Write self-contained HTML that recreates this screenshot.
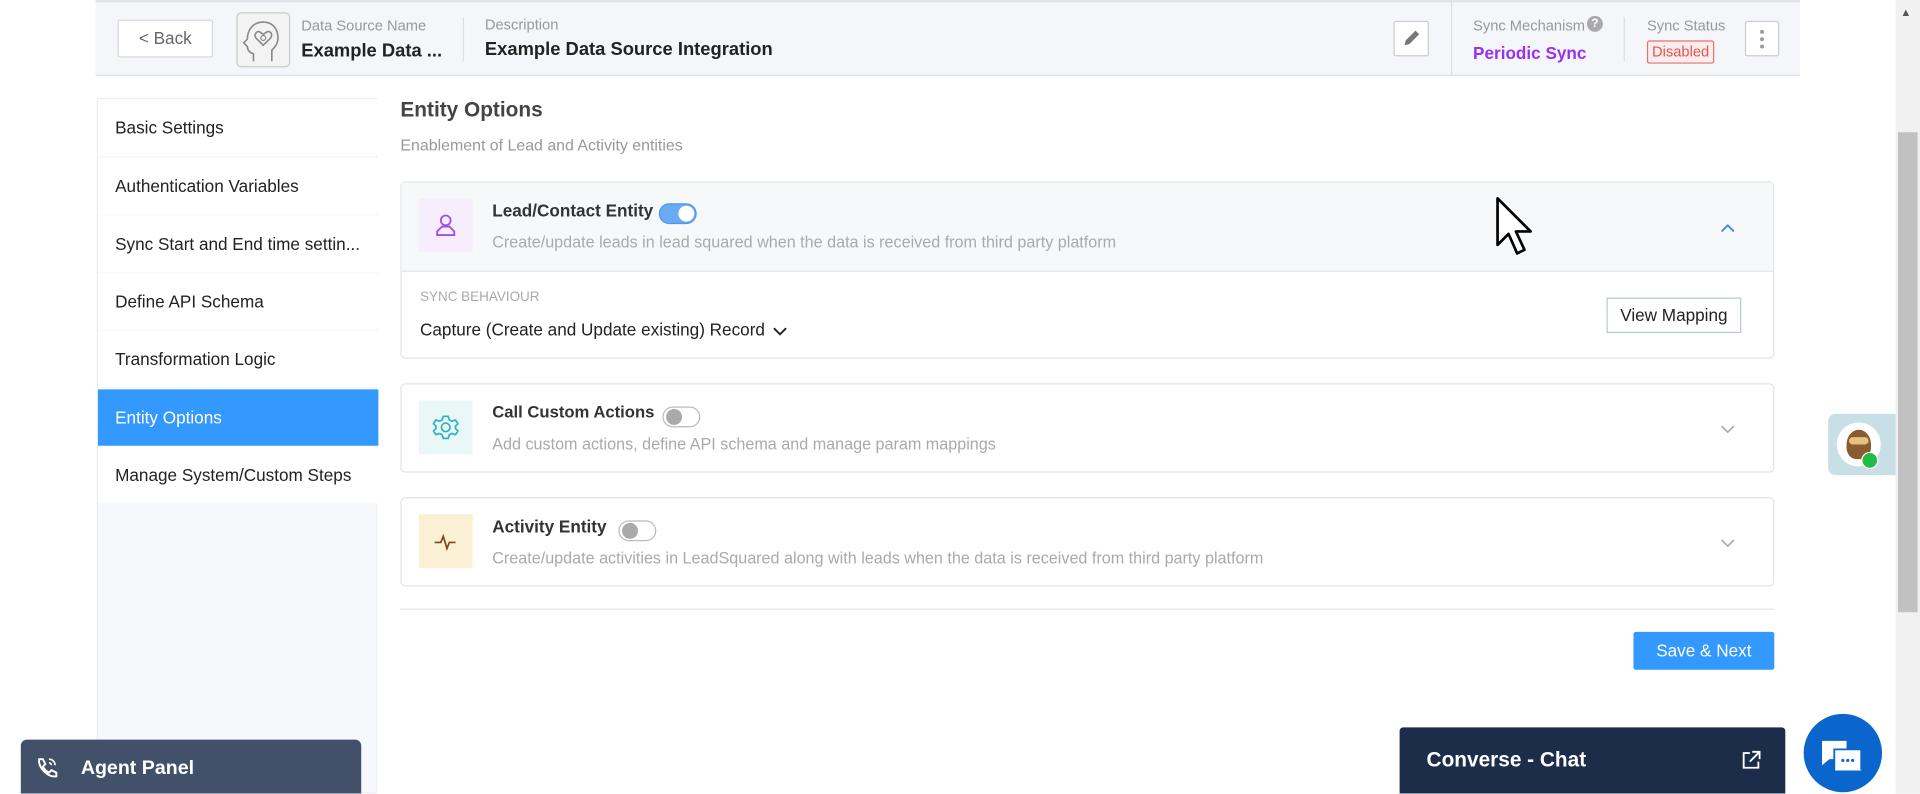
<!DOCTYPE html>
<html><head><meta charset="utf-8">
<style>
html,body{margin:0;padding:0;width:1920px;height:794px;overflow:hidden;background:#fff;}
#w{position:absolute;left:0;top:0;width:1568px;height:648px;transform:scale(1.22449);transform-origin:0 0;font-family:"Liberation Sans",sans-serif;color:#333;}
.a{position:absolute;}
.t{position:absolute;white-space:nowrap;}
.side div{position:absolute;left:0;width:229px;height:46px;background:#fff;font-size:14px;line-height:46px;padding-left:14px;box-sizing:border-box;color:#222;}
.card{position:absolute;left:327px;width:1122px;border:1px solid #e2e4ea;border-radius:4px;background:#fff;box-sizing:border-box;}
.ib{position:absolute;left:14px;width:44px;height:44px;}
.tog{position:absolute;width:31px;height:17px;border-radius:10px;box-sizing:border-box;}
.d{position:absolute;white-space:nowrap;font-size:13.2px;color:#aaa;left:74px;top:41px;}
</style></head><body><div id="w">
<!-- header -->
<div class="a" style="left:78px;top:0;width:1392px;height:62px;background:#f5f6f9;border-bottom:1px solid #dfe1e8;border-top:2px solid #e3e4ea;box-sizing:border-box;"></div>
<div class="a" style="left:96px;top:16px;width:78px;height:31px;border:1px solid #d6d8dd;background:#fff;box-sizing:border-box;border-radius:2px;font-size:14px;line-height:29px;text-align:center;color:#666;">&lt; Back</div>
<div class="a" style="left:193px;top:10px;width:44px;height:45px;border:1px solid #ccc;border-radius:4px;background:#f3f3f3;box-sizing:border-box;">
<svg width="42" height="43" viewBox="0 0 42 43"><path d="M13 39v-6c-3-1-5-3-5-6l-3-3 3-3c0-8 5-14 13-14s12 6 12 13c0 5-3 8-5 10v9" fill="none" stroke="#888" stroke-width="1.3"/><path d="M21 26l-6-6c-2-3 1-6 3-5l3 2 3-2c3-1 5 2 3 5z" fill="none" stroke="#888" stroke-width="1.3"/><circle cx="21" cy="20" r="2" fill="none" stroke="#888"/></svg></div>
<div class="t" style="left:246px;top:14px;font-size:12px;color:#999;">Data Source Name</div>
<div class="t" style="left:246px;top:33px;font-size:15px;font-weight:bold;color:#222;">Example Data ...</div>
<div class="a" style="left:378px;top:14px;width:1px;height:36px;background:#e0e0e0;"></div>
<div class="t" style="left:396px;top:13px;font-size:12px;color:#999;">Description</div>
<div class="t" style="left:396px;top:32px;font-size:15px;font-weight:bold;color:#222;">Example Data Source Integration</div>
<div class="a" style="left:1138px;top:17px;width:29px;height:29px;border:1px solid #ccc;background:#fff;box-sizing:border-box;border-radius:2px;">
<svg width="27" height="27" viewBox="0 0 27 27"><path d="M8 19l1-4 8-8 3 3-8 8z" fill="#777"/></svg></div>
<div class="a" style="left:1185px;top:0;width:1px;height:62px;background:#e0e0e0;"></div>
<div class="t" style="left:1203px;top:14px;font-size:12px;color:#999;">Sync Mechanism</div>
<div class="a" style="left:1296px;top:13px;width:13px;height:13px;border-radius:50%;background:#aaa;color:#fff;font-size:10px;line-height:13px;text-align:center;font-weight:bold;">?</div>
<div class="t" style="left:1203px;top:35px;font-size:14px;font-weight:bold;color:#9b2ef0;">Periodic Sync</div>
<div class="a" style="left:1326px;top:14px;width:1px;height:36px;background:#e0e0e0;"></div>
<div class="t" style="left:1345px;top:14px;font-size:12px;color:#999;">Sync Status</div>
<div class="a" style="left:1345px;top:33px;width:55px;height:19px;border:1px solid #e57373;background:#fdecec;border-radius:2px;box-sizing:border-box;color:#e05555;font-size:12px;line-height:17px;text-align:center;">Disabled</div>
<div class="a" style="left:1425px;top:17px;width:28px;height:29px;border:1px solid #ccc;background:#fff;box-sizing:border-box;border-radius:2px;">
<svg width="26" height="27"><circle cx="13" cy="8" r="1.6" fill="#999"/><circle cx="13" cy="14" r="1.6" fill="#999"/><circle cx="13" cy="20" r="1.6" fill="#999"/></svg></div>
<!-- scrollbar -->
<div class="a" style="left:1548px;top:0;width:20px;height:648px;background:#f1f1f1;"></div>
<div class="a" style="left:1550px;top:108px;width:16px;height:392px;background:#c1c1c1;"></div>
<div class="t" style="left:1552px;top:5px;font-size:9px;color:#555;">▲</div>
<!-- sidebar -->
<div class="a side" style="left:79px;top:80px;width:229px;height:568px;background:#f7f8fb;border:1px solid #eceef2;box-sizing:border-box;">
<div style="top:0">Basic Settings</div>
<div style="top:48px">Authentication Variables</div>
<div style="top:95px">Sync Start and End time settin...</div>
<div style="top:142px">Define API Schema</div>
<div style="top:189px">Transformation Logic</div>
<div style="top:237px;background:#3399ff;color:#fff;">Entity Options</div>
<div style="top:284px">Manage System/Custom Steps</div>
</div>
<!-- main -->
<div class="t" style="left:327px;top:80px;font-size:17px;font-weight:bold;color:#444;">Entity Options</div>
<div class="t" style="left:327px;top:111px;font-size:13px;color:#999;">Enablement of Lead and Activity entities</div>
<!-- card1 -->
<div class="card" style="top:148px;height:145px;">
<div class="a" style="left:0;top:0;width:1120px;height:72px;background:#f7f8fa;border-bottom:1px solid #e2e4ea;"></div>
<div class="ib" style="top:13px;background:#f6eefc;"><svg width="44" height="44"><circle cx="22" cy="18" r="4" fill="none" stroke="#a050e8" stroke-width="1.5"/><path d="M15 30v-3l4-4h6l4 4v3z" fill="none" stroke="#a050e8" stroke-width="1.5"/></svg></div>
<div class="t" style="left:74px;top:15px;font-size:14px;font-weight:bold;color:#333;">Lead/Contact Entity</div>
<div class="tog" style="left:210px;top:17px;background:#6aaaf5;border:1px solid #4c95ee;"><div class="a" style="right:1px;top:1px;width:13px;height:13px;border-radius:50%;background:#fff;"></div></div>
<div class="d">Create/update leads in lead squared when the data is received from third party platform</div>
<svg class="a" style="left:1076px;top:32px" width="14" height="10"><path d="M2 8l5-5 5 5" fill="none" stroke="#3a8be8" stroke-width="1.5"/></svg>
<div class="t" style="left:15px;top:88px;font-size:11px;color:#aaa;">SYNC BEHAVIOUR</div>
<div class="t" style="left:15px;top:112px;font-size:14px;color:#222;">Capture (Create and Update existing) Record</div>
<svg class="a" style="left:303px;top:116px" width="12" height="10"><path d="M1 3l5 5 5-5" fill="none" stroke="#222" stroke-width="1.5"/></svg>
<div class="a" style="left:984px;top:94px;width:110px;height:29px;border:1px solid #b8c8de;box-sizing:border-box;font-size:14px;line-height:27px;text-align:center;color:#222;">View Mapping</div>
</div>
<!-- card2 -->
<div class="card" style="top:313px;height:73px;">
<div class="ib" style="top:13px;background:#e9f7f7;"><svg width="44" height="44" viewBox="0 0 44 44"><circle cx="22" cy="22" r="3.5" fill="none" stroke="#2bb5c4" stroke-width="1.4"/><path d="M20 13h4l1 3 2 1 3-1 2 3-2 2v2l2 2-2 3-3-1-2 1-1 3h-4l-1-3-2-1-3 1-2-3 2-2v-2l-2-2 2-3 3 1 2-1z" fill="none" stroke="#2bb5c4" stroke-width="1.4" stroke-linejoin="round"/></svg></div>
<div class="t" style="left:74px;top:15px;font-size:13.6px;font-weight:bold;color:#333;">Call Custom Actions</div>
<div class="tog" style="left:213px;top:18px;background:#fff;border:1px solid #bbb;"><div class="a" style="left:2px;top:1px;width:13px;height:13px;border-radius:50%;background:#aaa;"></div></div>
<div class="d">Add custom actions, define API schema and manage param mappings</div>
<svg class="a" style="left:1076px;top:32px" width="14" height="10"><path d="M2 2l5 5 5-5" fill="none" stroke="#aaa" stroke-width="1.3"/></svg>
</div>
<!-- card3 -->
<div class="card" style="top:406px;height:73px;">
<div class="ib" style="top:13px;background:#fbf0d3;"><svg width="44" height="44"><path d="M13 23h5l2-5 3 10 2-5h5" fill="none" stroke="#7a4a22" stroke-width="1.4"/></svg></div>
<div class="t" style="left:74px;top:15px;font-size:14px;font-weight:bold;color:#333;">Activity Entity</div>
<div class="tog" style="left:177px;top:18px;background:#fff;border:1px solid #bbb;"><div class="a" style="left:2px;top:1px;width:13px;height:13px;border-radius:50%;background:#aaa;"></div></div>
<div class="d">Create/update activities in LeadSquared along with leads when the data is received from third party platform</div>
<svg class="a" style="left:1076px;top:32px" width="14" height="10"><path d="M2 2l5 5 5-5" fill="none" stroke="#aaa" stroke-width="1.3"/></svg>
</div>
<div class="a" style="left:327px;top:497px;width:1122px;height:1px;background:#e2e4ea;"></div>
<div class="a" style="left:1334px;top:516px;width:115px;height:31px;background:#3399ff;color:#fff;font-size:14px;line-height:31px;text-align:center;border-radius:2px;">Save &amp; Next</div>
<!-- cursor -->
<svg class="a" style="left:1220px;top:160px" width="32" height="50"><path d="M3 2v38l9-9 7 16 6-3-7-15h12z" fill="#fff" stroke="#000" stroke-width="2.2" stroke-linejoin="round"/></svg>
<!-- avatar widget -->
<div class="a" style="left:1493px;top:338px;width:55px;height:50px;background:#c8dfe7;border-radius:6px 0 0 6px;"></div>
<div class="a" style="left:1500px;top:345px;width:36px;height:36px;border-radius:50%;background:#fff;"></div>
<div class="a" style="left:1508px;top:351px;width:20px;height:24px;border-radius:50% 50% 40% 40%;background:#8a5a30;"></div>
<div class="a" style="left:1510px;top:357px;width:16px;height:6px;border-radius:3px;background:#e8c080;"></div>
<div class="a" style="left:1520px;top:369px;width:12px;height:12px;border-radius:50%;background:#22bb44;border:1px solid #fff;"></div>
<!-- agent panel -->
<div class="a" style="left:17px;top:604px;width:278px;height:44px;background:#435069;border-radius:5px 5px 0 0;"></div>
<svg class="a" style="left:28px;top:617px" width="20" height="20"><path d="M4 3l3 0 2 4-2 2c1 2 3 4 5 5l2-2 4 2v3c-7 1-15-7-14-14z" fill="none" stroke="#fff" stroke-width="1.6"/><path d="M12 3a5 5 0 0 1 5 5M12 6a2 2 0 0 1 2 2" stroke="#fff" fill="none" stroke-width="1.3"/></svg>
<div class="t" style="left:66px;top:619px;font-size:16px;font-weight:bold;color:#fff;">Agent Panel</div>
<!-- converse chat -->
<div class="a" style="left:1143px;top:594px;width:315px;height:54px;background:#1c2d4a;border-radius:3px 3px 0 0;"></div>
<div class="t" style="left:1165px;top:611px;font-size:17px;font-weight:bold;color:#fff;">Converse - Chat</div>
<svg class="a" style="left:1421px;top:612px" width="18" height="18"><path d="M8 3H3v12h12v-5M10 2h6v6M16 2l-8 8" fill="none" stroke="#fff" stroke-width="1.5"/></svg>
<div class="a" style="left:1473px;top:583px;width:64px;height:64px;border-radius:50%;background:#0a66cc;"></div>
<svg class="a" style="left:1486px;top:603px" width="40" height="34"><path d="M2 2h20v15H8l-6 5z" fill="#fff"/><path d="M12 9h22v16l5 5-5-3H12z" fill="#fff" stroke="#0a66cc" stroke-width="1.5"/><circle cx="19" cy="18" r="1.3" fill="#0a66cc"/><circle cx="23" cy="18" r="1.3" fill="#0a66cc"/><circle cx="27" cy="18" r="1.3" fill="#0a66cc"/></svg>
</div></body></html>
